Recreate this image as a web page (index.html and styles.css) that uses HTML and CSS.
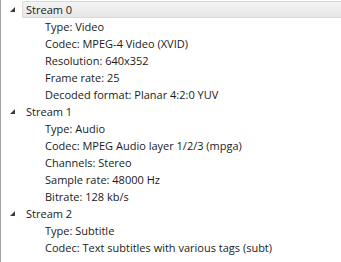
FILE: index.html
```html
<!DOCTYPE html>
<html>

<head>
	<meta charset="UTF-8">
	<title>Codec</title>
	<link rel="stylesheet" href="styles.css">
</head>

<body>
	<div class="tree">
		<div class="row stream selected"><span class="arrow"></span><span class="label">Stream 0</span></div>
		<div class="row item">Type: Video</div>
		<div class="row item">Codec: MPEG-4 Video (XVID)</div>
		<div class="row item">Resolution: 640x352</div>
		<div class="row item">Frame rate: 25</div>
		<div class="row item">Decoded format: Planar 4:2:0 YUV</div>
		<div class="row stream"><span class="arrow"></span><span class="label">Stream 1</span></div>
		<div class="row item">Type: Audio</div>
		<div class="row item">Codec: MPEG Audio layer 1/2/3 (mpga)</div>
		<div class="row item">Channels: Stereo</div>
		<div class="row item">Sample rate: 48000 Hz</div>
		<div class="row item">Bitrate: 128 kb/s</div>
		<div class="row stream"><span class="arrow"></span><span class="label">Stream 2</span></div>
		<div class="row item">Type: Subtitle</div>
		<div class="row item">Codec: Text subtitles with various tags (subt)</div>
	</div>
</body>

</html>
```

FILE: styles.css
```css
html, body {
	margin: 0;
	background: #ffffff;
}

.tree {
	height: 262px;
	box-sizing: border-box;
	padding-top: 1px;
	border-left: 1px solid #a0a0a0;
	font-family: "Open Sans", Arial, sans-serif;
	font-size: 11px;
	color: #1a1a1a;
}

.row {
	height: 17px;
	line-height: 17px;
	white-space: nowrap;
}

.item {
	padding-left: 44px;
}

.stream {
	display: flex;
	align-items: center;
}

.arrow {
	width: 21px;
	height: 17px;
	position: relative;
}

.arrow::after {
	content: "";
	position: absolute;
	left: 9px;
	top: 6px;
	border-style: solid;
	border-width: 0 0 5px 5px;
	border-color: transparent transparent #3c3c3c transparent;
}

.label {
	flex: 1;
	height: 15px;
	line-height: 15px;
	padding-left: 3px;
	border: 1px solid transparent;
	border-right: none;
	border-radius: 2px 0 0 2px;
}

.selected .label {
	background: linear-gradient(#f4f4f4, #e6e6e6);
	border-color: #d8d8d8;
}
```
